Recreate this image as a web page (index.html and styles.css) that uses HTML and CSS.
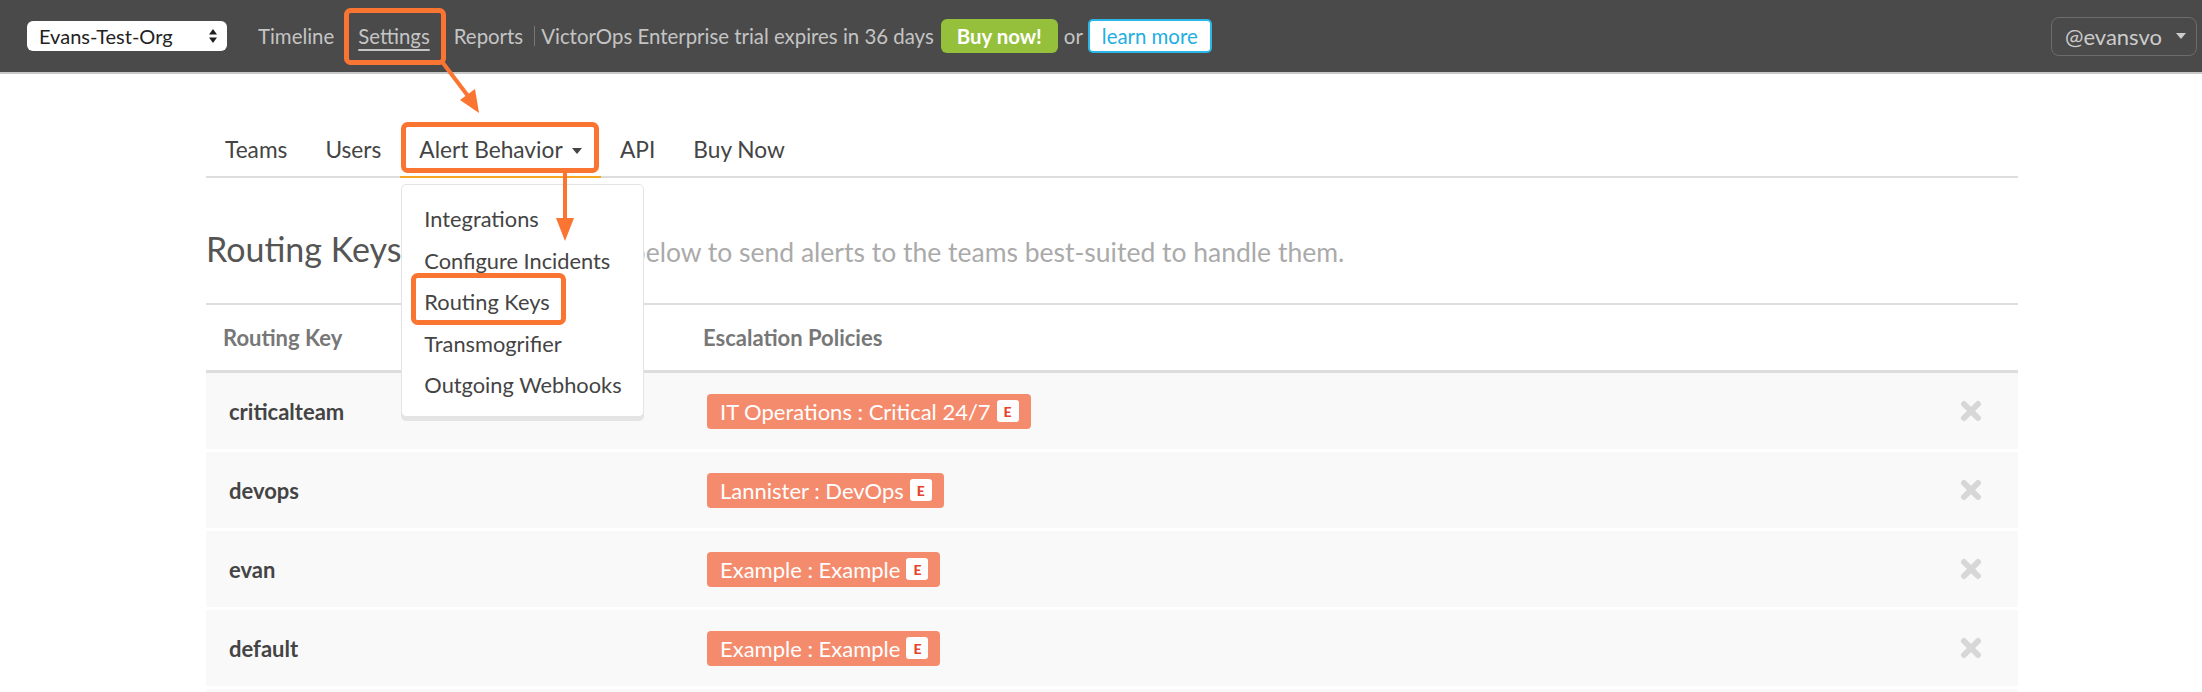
FILE: index.html
```html
<!doctype html>
<html lang="en">
<head>
    <meta charset="UTF-8">
    <title>Routing Keys</title>
    <link rel="stylesheet" href="styles.css">
</head>
<body>
<div class="topbar">
    <div class="org-select">
        <span>Evans-Test-Org</span>
        <svg width="10" height="16" viewBox="0 0 10 16"><path d="M5 1L9 6.5H1z M5 15L9 9.5H1z" fill="#222"/></svg>
    </div>
    <a class="top-link first">Timeline</a>
    <a class="top-link active">Settings</a>
    <a class="top-link">Reports</a>
    <span class="sep"></span>
    <span class="trial">VictorOps Enterprise trial expires in 36 days</span>
    <a class="btn-buy">Buy now!</a>
    <span class="or">or</span>
    <a class="btn-learn">learn more</a>
    <div class="user">@evansvo<span class="caret"></span></div>
</div>

<div class="main">
    <ul class="tabs">
        <li>Teams</li>
        <li>Users</li>
        <li class="current">Alert Behavior <span class="caret"></span>
            <ul class="menu">
                <li>Integrations</li>
                <li>Configure Incidents</li>
                <li>Routing Keys</li>
                <li>Transmogrifier</li>
                <li>Outgoing Webhooks</li>
            </ul>
        </li>
        <li>API</li>
        <li>Buy Now</li>
    </ul>

    <h2 class="title">Routing Keys <small>Use routing keys below to send alerts to the teams best-suited to handle them.</small></h2>

    <div class="keys">
        <div class="keys-head">
            <span>Routing Key</span>
            <span>Escalation Policies</span>
            <span></span>
        </div>
        <div class="key-row">
            <span class="key-name">criticalteam</span>
            <span class="policy"><span class="badge">IT Operations : Critical 24/7 <b class="e">E</b></span></span>
            <span class="remove"><svg width="22" height="22" viewBox="0 0 22 22"><path d="M4 4L18 18M18 4L4 18" stroke="#d7d7d7" stroke-width="6" stroke-linecap="round"/></svg></span>
        </div>
        <div class="key-row">
            <span class="key-name">devops</span>
            <span class="policy"><span class="badge">Lannister : DevOps <b class="e">E</b></span></span>
            <span class="remove"><svg width="22" height="22" viewBox="0 0 22 22"><path d="M4 4L18 18M18 4L4 18" stroke="#d7d7d7" stroke-width="6" stroke-linecap="round"/></svg></span>
        </div>
        <div class="key-row">
            <span class="key-name">evan</span>
            <span class="policy"><span class="badge">Example : Example <b class="e">E</b></span></span>
            <span class="remove"><svg width="22" height="22" viewBox="0 0 22 22"><path d="M4 4L18 18M18 4L4 18" stroke="#d7d7d7" stroke-width="6" stroke-linecap="round"/></svg></span>
        </div>
        <div class="key-row">
            <span class="key-name">default</span>
            <span class="policy"><span class="badge">Example : Example <b class="e">E</b></span></span>
            <span class="remove"><svg width="22" height="22" viewBox="0 0 22 22"><path d="M4 4L18 18M18 4L4 18" stroke="#d7d7d7" stroke-width="6" stroke-linecap="round"/></svg></span>
        </div>
        <div class="key-row"></div>
    </div>
</div>

<!-- callouts drawn over the screenshot -->
<svg class="notes" width="2202" height="692" viewBox="0 0 2202 692">
    <g fill="none" stroke="#fb7532" stroke-width="5">
        <rect x="346.5" y="10.5" width="97" height="52" rx="4"/>
        <rect x="403.5" y="124.5" width="193" height="46" rx="4"/>
        <rect x="413.5" y="275.5" width="150" height="47" rx="4"/>
    </g>
    <g stroke="#fb7532" stroke-width="4" fill="#fb7532">
        <line x1="443" y1="63" x2="468" y2="96"/>
        <polygon points="479,113 460,100 475,89" stroke="none"/>
        <line x1="565" y1="172" x2="565" y2="222"/>
        <polygon points="556,218 574,218 565,241" stroke="none"/>
    </g>
</svg>
</body>
</html>
```

FILE: styles.css
```css
* {
    margin: 0;
    padding: 0;
    box-sizing: border-box;
    list-style: none;
}

body {
    position: relative;
    width: 2202px;
    height: 692px;
    overflow: hidden;
    background: #fff;
    color: #444;
    font-family: Lato, "Open Sans", sans-serif;
}

/* top bar */
.topbar {
    display: flex;
    align-items: center;
    height: 74px;
    padding: 0 5px 0 27px;
    background: #4a4a4a;
    border-bottom: 2px solid #c9c9c9;
    font-size: 20.4px;
    color: #c4c4c4;
}

.org-select {
    display: flex;
    align-items: center;
    justify-content: space-between;
    width: 200px;
    height: 30px;
    padding: 0 9px 0 12px;
    background: #fff;
    border-radius: 6px;
    font-size: 20px;
    color: #222;
}

.top-link {
    margin-left: 24px;
    color: #c4c4c4;
}

.top-link.first {
    margin-left: 31px;
}

.top-link.active {
    text-decoration: underline;
    text-decoration-thickness: 2px;
    text-underline-offset: 5px;
}

.sep {
    width: 1px;
    height: 20px;
    margin: 0 6px 0 11px;
    background: #777;
}

.btn-buy {
    margin-left: 7px;
    height: 34px;
    line-height: 34px;
    padding: 0 16px;
    background: #95c03b;
    border-radius: 6px;
    font-weight: 700;
    color: #fff;
}

.or {
    margin: 0 5px 0 6px;
}

.btn-learn {
    height: 34px;
    line-height: 30px;
    padding: 0 12px;
    background: #fff;
    border: 2px solid #2ab7e8;
    border-radius: 5px;
    color: #22aee0;
}

.user {
    display: flex;
    align-items: center;
    margin-left: auto;
    width: 146px;
    height: 39px;
    padding: 0 13px;
    border: 1px solid #6c6c6c;
    border-radius: 8px;
    font-size: 22px;
    color: #ccc;
}

.user .caret {
    margin-left: 14px;
    border-top: 6px solid #ccc;
}

.caret {
    display: inline-block;
    width: 0;
    height: 0;
    border-top: 6px solid #444;
    border-left: 5px solid transparent;
    border-right: 5px solid transparent;
    vertical-align: middle;
}

/* settings tabs */
.main {
    width: 1812px;
    margin-left: 206px;
}

.tabs {
    display: flex;
    padding-top: 50px;
    border-bottom: 2px solid #ddd;
}

.tabs > li {
    position: relative;
    padding: 0 19px;
    line-height: 52px;
    font-size: 22.7px;
    color: #444;
}

.tabs > li.current {
    margin-bottom: -2px;
    border-bottom: 2px solid #f5a623;
}

.tabs > li .caret {
    margin: -3px 0 0 4px;
}

.menu {
    position: absolute;
    top: 60px;
    left: 1px;
    width: 243px;
    padding: 13px 0 10px;
    background: #fff;
    border: 1px solid #e4e4e4;
    border-radius: 5px;
    box-shadow: 0 4px 0 #e4e4e4;
    z-index: 5;
}

.menu li {
    padding-left: 22px;
    line-height: 41.5px;
    font-size: 21.8px;
    color: #444;
    white-space: nowrap;
}

/* heading */
.title {
    margin: 51px 0 34px;
    height: 40px;
    font-size: 34px;
    font-weight: 400;
    line-height: 40px;
    color: #555;
    white-space: nowrap;
}

.title small {
    margin-left: 21px;
    font-size: 26.5px;
    line-height: 1;
    color: #aaa;
}

/* routing key table */
.keys-head,
.key-row {
    display: grid;
    grid-template-columns: 480px 1fr 94px;
    align-items: center;
}

.keys-head {
    height: 70px;
    border-top: 2px solid #ddd;
    border-bottom: 3px solid #ddd;
    font-size: 22px;
    font-weight: 700;
    color: #777;
}

.keys-head span {
    padding-left: 17px;
}

.key-row {
    height: 76px;
    margin-bottom: 3px;
    background: #f9f9f9;
}

.key-name {
    padding-left: 23px;
    font-size: 22px;
    font-weight: 700;
    color: #444;
}

.policy {
    padding-left: 21px;
}

.badge {
    display: inline-flex;
    align-items: center;
    height: 35px;
    padding: 0 12px 0 13px;
    background: #f58b6d;
    border-radius: 4px;
    font-size: 22px;
    color: #fff;
}

.badge .e {
    display: flex;
    align-items: center;
    justify-content: center;
    width: 22px;
    height: 22px;
    margin-left: 6px;
    background: #fff;
    border-radius: 3px;
    font-size: 14px;
    font-weight: 900;
    color: #e5452b;
}

.remove {
    display: flex;
    justify-content: center;
}

.notes {
    position: absolute;
    top: 0;
    left: 0;
    pointer-events: none;
    z-index: 10;
}
```
